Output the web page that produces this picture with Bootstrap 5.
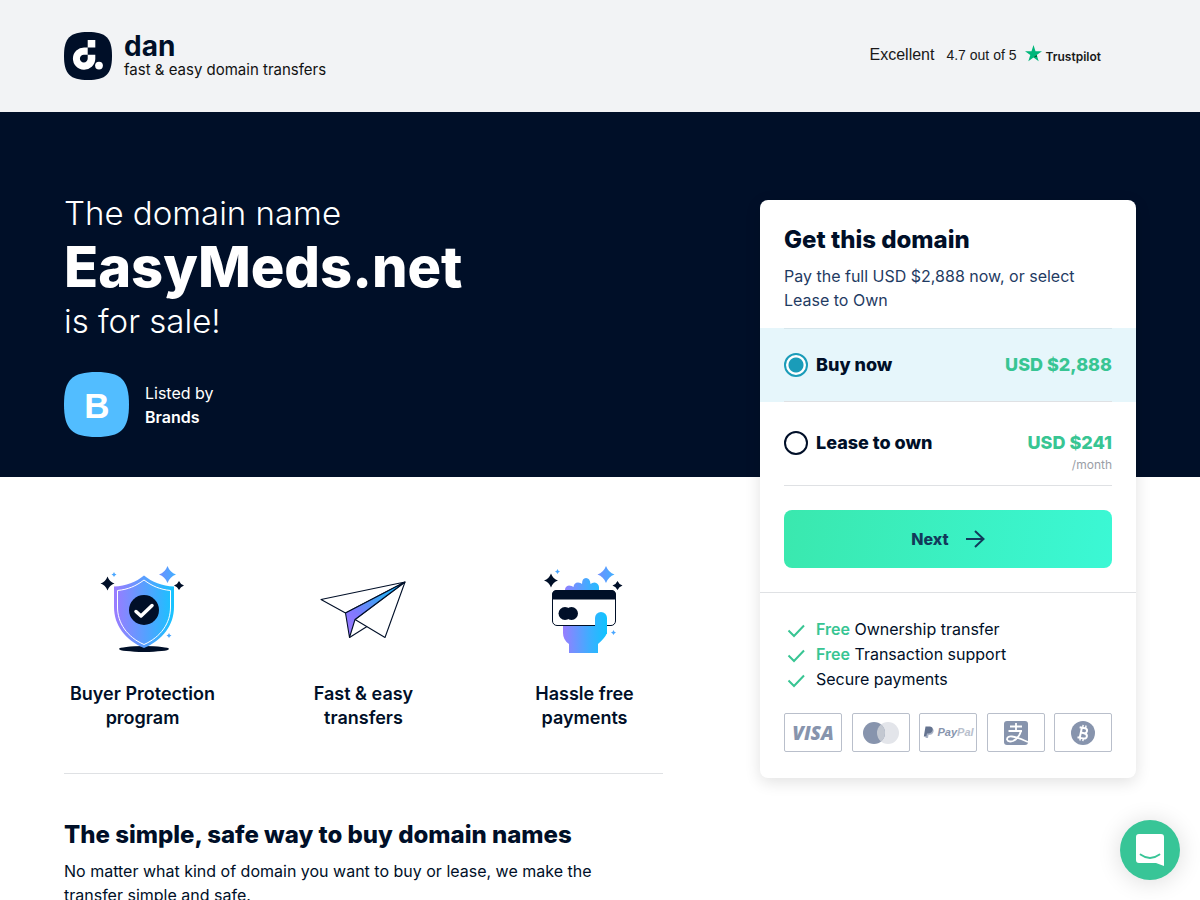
<!DOCTYPE html>
<html lang="en">
<head>
<meta charset="utf-8">
<meta name="viewport" content="width=device-width, initial-scale=1">
<title>EasyMeds.net is for sale!</title>
<link href="https://cdn.jsdelivr.net/npm/bootstrap@5.3.0/dist/css/bootstrap.min.css" rel="stylesheet">
<style>
  :root { --navy: #000f28; --green: #38c593; --line: #dfe1e4; --slate: #8794ad; }
  body { font-family: Inter, "Open Sans", sans-serif; font-size: 16px; line-height: 24px; color: var(--navy); background: #fff; }
  a { color: inherit; text-decoration: none; }
  .site-header { background: #f2f3f5; padding: 32px 64px; }
  .brand-name { font-size: 28px; line-height: 28px; font-weight: 700; }
  .brand-tag { font-size: 15px; line-height: 20px; color: #111; }
  .trust { font-family: "Liberation Sans", Arial, sans-serif; color: #191919; padding: 0 35px 2px 0; font-size: 14px; }
  .trust-word { font-size: 16px; }
  .trust-logo { font-family: Inter, sans-serif; font-size: 12px; font-weight: 600; }

  .page-grid { display: grid; grid-template-columns: 64px minmax(0, 1fr) 376px 64px; grid-template-rows: auto 1fr; }
  .hero-band { grid-column: 1 / -1; grid-row: 1; background: var(--navy); }
  .hero-text { grid-column: 2; grid-row: 1; padding: 81px 96px 40px 0; color: #fff; }
  .details { grid-column: 2; grid-row: 2; padding: 80px 97px 0 0; }
  .buy-side { grid-column: 3; grid-row: 1 / 3; padding-top: 88px; }

  .hero-lead { font-size: 33px; line-height: 40px; font-weight: 300; }
  .hero-domain { font-size: 56px; line-height: 68px; font-weight: 800; }
  .seller { margin-top: 31px; }

  .offer { border-radius: 8px; box-shadow: 0 4px 16px rgba(0, 0, 0, .12); background: #fff; }
  .title-24 { font-size: 24px; line-height: 32px; font-weight: 800; margin-bottom: 8px; }
  .offer-intro { color: #1f3b63; }
  .plan { padding: 0 24px; cursor: pointer; font-size: 18px; font-weight: 800; }
  .plan-line { border-bottom: 1px solid var(--line); padding: 24px 0; }
  .plan-active { background: #e6f6fb; }
  .plan-active .plan-line { border-top: 1px solid #d6e6ec; }
  .plan-lease .plan-line { padding: 29px 0 10px; }
  .plan-radio.form-check-input { width: 24px; height: 24px; margin: 0; border: 2px solid var(--navy); background: #fff; box-shadow: none; flex: none; }
  .plan-radio.form-check-input:checked { border-color: #1a9cb9; background: radial-gradient(circle, #1a9cb9 7px, #fff 8px); }
  .price { color: var(--green); }
  .per { font-size: 12px; line-height: 20px; font-weight: 400; color: #9a9ea6; }
  .next-btn { height: 58px; border: 0; border-radius: 8px; color: #123a5a; font-weight: 800; background: linear-gradient(100deg, #3ae8ae, #3bf8d5); }
  .next-btn:hover { color: #123a5a; }
  .perks { border-top: 1px solid var(--line); padding: 24px 24px 26px; }
  .perks li { line-height: 25px; }
  .perks b { color: var(--green); font-weight: 600; }
  .pay-row { margin-top: 21px; }
  .pay { width: 58px; height: 39px; border: 1px solid #b9bfcb; border-radius: 2px; color: var(--slate); }
  .pay svg { display: block; }

  .feature-grid { display: grid; grid-template-columns: repeat(3, minmax(0, 1fr)); gap: 64px; padding-bottom: 43px; border-bottom: 1px solid var(--line); margin-bottom: 45px; }
  .feature-grid svg { margin-bottom: 25px; }
  .feature-name { font-size: 18px; line-height: 24px; font-weight: 600; margin: 0; }
  .reading { max-width: 580px; }
  .chat { width: 60px; height: 60px; right: 20px; bottom: 20px; background: #38c597; border: 0; box-shadow: 0 2px 24px rgba(0, 0, 0, .14); }
  @media (max-width: 900px) {
    .page-grid { grid-template-columns: 24px minmax(0, 1fr) 24px; }
    .hero-text, .details, .buy-side { grid-column: 2; padding-right: 0; }
    .buy-side { grid-row: 2; padding-top: 24px; }
    .details { grid-row: 3; }
    .site-header { padding: 24px; }
  }
</style>
</head>
<body>
<header class="site-header d-flex flex-wrap justify-content-between align-items-center gap-3">
  <a href="#" class="d-flex align-items-center">
    <svg width="48" height="48" viewBox="0 0 48 48" aria-hidden="true">
      <path fill="#000f28" d="M24 0C42 0 48 6 48 24S42 48 24 48 0 42 0 24 6 0 24 0z"/>
      <path fill="#fff" fill-rule="evenodd" d="M23.700 8H31.300V15.400H23.700zM23.700 15.400V22.700H31.300V27A11.200 11.200 0 1 1 20.300 15.400zM23.700 22.700H20A3.900 3.900 0 1 0 23.700 26.500z"/>
      <circle cx="35" cy="33.600" r="3.900" fill="#fff"/>
    </svg>
    <span class="d-flex flex-column ms-2 ps-1">
      <span class="brand-name">dan</span>
      <span class="brand-tag">fast &amp; easy domain transfers</span>
    </span>
  </a>
  <a href="#" class="trust d-flex align-items-center">
    <span class="trust-word me-2 pe-1">Excellent</span>
    <span class="me-2">4.7 out of 5</span>
    <svg width="17" height="17" viewBox="0 0 17 17" class="mb-1" aria-hidden="true"><path fill="#00b67a" d="M8.500 0 10.500 6.200H17L11.700 10 13.700 16.200 8.500 12.400 3.300 16.200 5.300 10 0 6.200H6.500z"/><path fill="#005128" d="m12.200 11.400-.5-1.400-3.200 2.400z"/></svg>
    <span class="trust-logo pt-1 ms-1">Trustpilot</span>
  </a>
</header>

<main class="page-grid">
  <div class="hero-band"></div>
  <section class="hero-text">
    <h1 class="m-0">
      <span class="hero-lead d-block">The domain name</span>
      <span class="hero-domain d-block">EasyMeds.net</span>
      <span class="hero-lead d-block">is for sale!</span>
    </h1>
    <div class="seller d-flex align-items-center gap-3">
      <svg width="65" height="65" viewBox="0 0 65 65" aria-hidden="true">
        <path fill="#52bdff" d="M32.500 0C57 0 65 8 65 32.500S57 65 32.500 65 0 57 0 32.500 8 0 32.500 0z"/>
        <text x="33" y="46" text-anchor="middle" font-family="Liberation Sans, Arial, sans-serif" font-size="35" font-weight="700" fill="#fff">B</text>
      </svg>
      <div>
        <div>Listed by</div>
        <div class="fw-semibold">Brands</div>
      </div>
    </div>
  </section>

  <section class="details">
    <div class="feature-grid text-center">
      <div>
        <svg width="95" height="100" viewBox="0 -3 95 100" aria-hidden="true">
          <defs>
            <linearGradient id="violetBlue"><stop offset="0" stop-color="#9b7bff"/><stop offset=".7" stop-color="#3fadff"/><stop offset="1" stop-color="#16c4ff"/></linearGradient>
            <linearGradient id="spark" x1="0" x2="1"><stop offset="0" stop-color="#6f8dff"/><stop offset="1" stop-color="#3fb0ff"/></linearGradient>
          </defs>
          <ellipse cx="49" cy="89" rx="25" ry="3" fill="#000f28"/>
          <path fill="url(#violetBlue)" d="M49 15.500C57 22 67 26 79 26.500V47C79 65 68 80 49 88 30 80 19 65 19 47V26.500C31 26 41 22 49 15.500z"/>
          <path fill="none" stroke="#fff" d="M49 20C57 26 65 29.500 75.500 30.500V47C75.500 63 66 77 49 84.500 32 77 22.500 63 22.500 47V30.500C33 29.500 41 26 49 20z"/>
          <circle cx="49" cy="50" r="15" fill="#000f28"/>
          <path d="M41 51.500 46 56 57 45.500" fill="none" stroke="#fff" stroke-width="3.500" stroke-linecap="round" stroke-linejoin="round"/>
          <path fill="#000f28" d="M12.500 16.500Q14.500 22 19.500 23.500 14.500 25 12.500 30.500 10.500 25 5.500 23.500 10.500 22 12.500 16.500zM84 21Q85.500 24.500 89 25.500 85.500 26.500 84 30 82.500 26.500 79 25.500 82.500 24.500 84 21z"/>
          <path fill="url(#spark)" d="M72.500 6Q75 12.500 81 14.500 75 16.500 72.500 23 70 16.500 64 14.500 70 12.500 72.500 6z"/>
          <path fill="#49a6ff" d="M19 12Q19.500 14 21.500 14.500 19.500 15 19 17 18.500 15 16.500 14.500 18.500 14 19 12zM74 73Q74.500 75 76.500 75.500 74.500 76 74 78 73.500 76 71.500 75.500 73.500 75 74 73z"/>
        </svg>
        <h3 class="feature-name">Buyer Protection program</h3>
      </div>
      <div>
        <svg width="105" height="100" viewBox="1 -3 105 100" aria-hidden="true">
          <defs><linearGradient id="fold" x1="0" y1="1" x2="1" y2="0"><stop offset="0" stop-color="#a07cff"/><stop offset=".3" stop-color="#8278ff"/><stop offset=".65" stop-color="#3ba5f5"/><stop offset="1" stop-color="#14b8ff"/></linearGradient></defs>
          <g stroke="#000f28" stroke-linejoin="round" stroke-width="1.100">
            <path fill="#fff" d="M95 22 11 39.500 35.500 53zM95 22 45 59.500 75 77.500z"/>
            <path fill="none" d="M39.500 77.500 57 66.500"/>
            <path fill="url(#fold)" d="M95 22 35.500 53 39.500 77.500 45 59.500z"/>
          </g>
        </svg>
        <h3 class="feature-name">Fast &amp; easy transfers</h3>
      </div>
      <div>
        <svg width="95" height="100" viewBox="2 -3 95 100" aria-hidden="true">
          <defs><linearGradient id="hand" gradientUnits="userSpaceOnUse" x1="27" y1="0" x2="72" y2="0"><stop offset="0" stop-color="#9b7bff"/><stop offset=".6" stop-color="#3fadff"/><stop offset="1" stop-color="#10c4ff"/></linearGradient></defs>
          <path fill="url(#hand)" d="M30 34V30Q30 26 34 25.500 37 25.500 38.500 27 39 22.500 43 22.500 46 22.500 47 24 47 18 51 18 55 18 55.500 24 57 22.500 59.500 22.500 63.500 23 64 27V34z"/>
          <path fill="url(#hand)" d="M28 60H72V73Q70 78 63 84V93H34V84Q28 80 28 73z"/>
          <rect x="17.500" y="30.500" width="63" height="35" rx="4.500" fill="#fff" stroke="#000f28"/>
          <path fill="#000f28" d="M17 39.500V35Q17 30 22 30H76Q81 30 81 35V39.500z"/>
          <circle cx="30" cy="53.500" r="6.500" fill="#000f28"/><circle cx="36.500" cy="53.500" r="6.500" fill="#000f28"/>
          <path fill="url(#hand)" d="M60 68V58A6 6 0 0 1 72 58V74H60z"/>
          <path fill="#000f28" d="M16 13.500Q18 19 23 20.500 18 22 16 27.500 14 22 9 20.500 14 19 16 13.500zM82.500 21Q84 24.500 87.500 25.500 84 26.500 82.500 30 81 26.500 77.500 25.500 81 24.500 82.500 21z"/>
          <path fill="url(#spark)" d="M71 6Q73.500 12.500 79.500 14.500 73.500 16.500 71 23 68.500 16.500 62.500 14.500 68.500 12.500 71 6z"/>
          <path fill="#49a6ff" d="M22.500 9Q23 11 25 11.500 23 12 22.500 14 22 12 20 11.500 22 11 22.500 9zM78.500 70Q79 72 81 72.500 79 73 78.500 75 78 73 76 72.500 78 72 78.500 70z"/>
        </svg>
        <h3 class="feature-name">Hassle free payments</h3>
      </div>
    </div>
    <h2 class="title-24">The simple, safe way to buy domain names</h2>
    <p class="reading mb-0">No matter what kind of domain you want to buy or lease, we make the transfer simple and safe.</p>
  </section>

  <aside class="buy-side">
    <form class="offer overflow-hidden">
      <div class="px-4 pt-4 pb-3">
        <h2 class="title-24">Get this domain</h2>
        <p class="offer-intro m-0">Pay the full USD $2,888 now, or select Lease to Own</p>
      </div>
      <label class="plan plan-active d-block" for="plan-buy">
        <span class="plan-line d-flex align-items-center gap-2">
          <input class="form-check-input plan-radio" type="radio" name="plan" id="plan-buy" checked>
          <span class="me-auto">Buy now</span>
          <span class="price">USD $2,888</span>
        </span>
      </label>
      <label class="plan plan-lease d-block" for="plan-lease">
        <span class="plan-line d-flex align-items-start gap-2">
          <input class="form-check-input plan-radio" type="radio" name="plan" id="plan-lease">
          <span class="me-auto">Lease to own</span>
          <span class="d-flex flex-column text-end"><span class="price">USD $241</span><span class="per">/month</span></span>
        </span>
      </label>
      <div class="p-4">
        <button type="button" class="btn next-btn w-100 d-flex align-items-center justify-content-center gap-3">Next
          <svg width="20" height="20" viewBox="0 0 20 20" fill="none" stroke="#123a5a" stroke-width="2" aria-hidden="true"><path d="M1 10H18M10 2 18.500 10 10 18"/></svg>
        </button>
      </div>
      <div class="perks">
        <ul class="list-unstyled m-0">
          <li class="d-flex align-items-center gap-2"><svg width="24" height="25" viewBox="0 0 24 25" fill="none" stroke="#38c593" stroke-width="2" aria-hidden="true"><path d="M4.500 13.500 10 19 20 8.500"/></svg><span><b>Free</b> Ownership transfer</span></li>
          <li class="d-flex align-items-center gap-2"><svg width="24" height="25" viewBox="0 0 24 25" fill="none" stroke="#38c593" stroke-width="2" aria-hidden="true"><path d="M4.500 13.500 10 19 20 8.500"/></svg><span><b>Free</b> Transaction support</span></li>
          <li class="d-flex align-items-center gap-2"><svg width="24" height="25" viewBox="0 0 24 25" fill="none" stroke="#38c593" stroke-width="2" aria-hidden="true"><path d="M4.500 13.500 10 19 20 8.500"/></svg><span>Secure payments</span></li>
        </ul>
        <div class="pay-row d-flex justify-content-between">
          <span class="pay"><svg width="56" height="37" viewBox="0 0 56 37"><text x="28" y="26" text-anchor="middle" font-family="Open Sans" font-size="19" font-weight="800" font-style="italic" fill="#8794ad">VISA</text></svg></span>
          <span class="pay"><svg width="56" height="37" viewBox="0 0 56 37" aria-label="Mastercard"><circle cx="35" cy="19" r="11" fill="#e3e5ea"/><circle cx="21" cy="19" r="11" fill="#8794ad"/><path fill="#c3c8d1" d="M28 10.500A11 11 0 0 1 28 27.500 11 11 0 0 1 28 10.500z"/></svg></span>
          <span class="pay"><svg width="56" height="37" viewBox="0 0 56 37"><path fill="#a9b3c6" d="M7 15.500 12.500 14.500Q14.500 16 13 19 12 21 8.500 21L8 24H5.500z"/><path fill="#64738f" d="M5.500 12.500H10Q13.500 13 12.500 16.500 11.500 19.500 8 19.500H7L6.300 22.500H3.800z"/><text x="17.500" y="22" font-family="Liberation Sans" font-size="11" font-weight="700" font-style="italic" fill="#8794ad">Pay<tspan fill="#b9c0cd">Pal</tspan></text></svg></span>
          <span class="pay"><svg width="56" height="37" viewBox="0 0 56 37" aria-label="Alipay"><rect x="16" y="7" width="24" height="24" rx="3" fill="#8794ad"/><path d="M22 12.500H34M28 9V17M20.500 17H34M33 17Q31 24 25 27 20 28.500 19 25.500 19 22 24 22.500 29 23 40 28" fill="none" stroke="#fff" stroke-width="1.800"/></svg></span>
          <span class="pay"><svg width="56" height="37" viewBox="0 0 56 37" aria-label="Bitcoin"><circle cx="28" cy="19" r="12" fill="#8794ad"/><g transform="rotate(12 28 19)" fill="none" stroke="#fff" stroke-width="2"><path d="M23.500 14H29Q31.500 14 31.500 16.500T29 19H26M29 19Q32.500 19 32.500 21.700T29 24.300H23.500M25.800 14V24"/><path stroke-width="1.400" d="M26.500 11V14M29.500 11V14M26.500 24V27M29.500 24V27"/></g></svg></span>
        </div>
      </div>
    </form>
  </aside>
</main>

<button type="button" class="chat position-fixed rounded-circle p-0" aria-label="Open chat">
  <svg width="60" height="60" viewBox="0 0 60 60" aria-hidden="true" class="d-block"><path fill="#fff" d="M19 14H41Q44 14 44 17V46L36 43H19Q16 43 16 40V17Q16 14 19 14z"/><path d="M20.500 34.500Q30 41.500 39.500 34.500" fill="none" stroke="#38c597" stroke-width="1.800" stroke-linecap="round"/></svg>
</button>
<script src="https://cdn.jsdelivr.net/npm/bootstrap@5.3.0/dist/js/bootstrap.bundle.min.js"></script>
</body>
</html>
